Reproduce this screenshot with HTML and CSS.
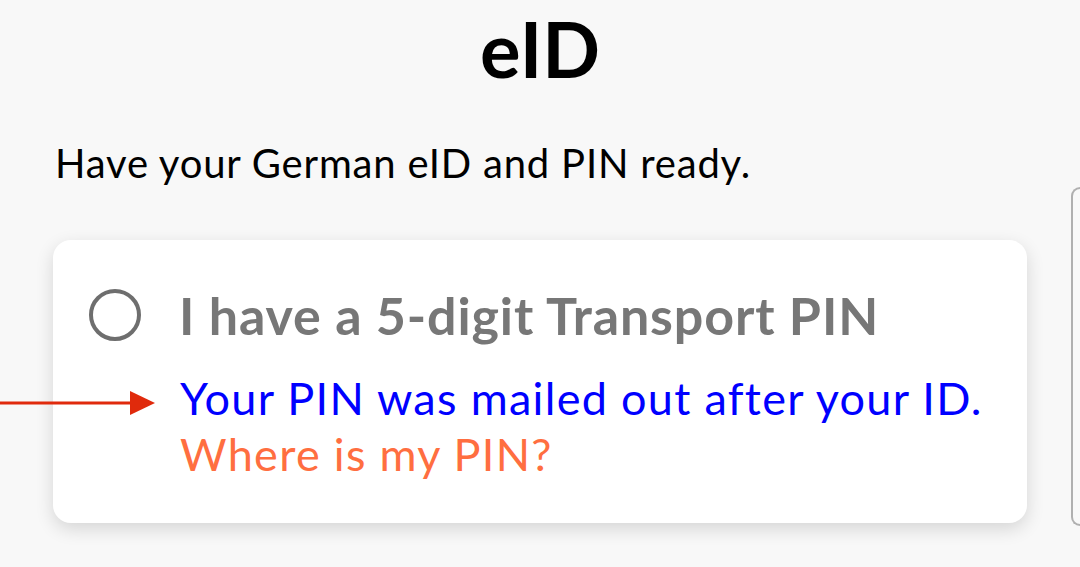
FILE: index.html
```html
<!DOCTYPE html>
<html>
<head>
<meta charset="utf-8">
<link rel="stylesheet" href="styles.css">
</head>
<body>
<div class="page">
  <h1 class="title">eID</h1>
  <p class="lead">Have your German eID and PIN ready.</p>
  <div class="row">
    <div class="card">
      <div class="option">
        <span class="radio"></span>
        <span class="option-label">I have a 5-digit Transport PIN</span>
      </div>
      <div class="hint">
        <div class="hint-blue">Your PIN was mailed out after your ID.</div>
        <div class="hint-link">Where is my PIN?</div>
      </div>
    </div>
    <div class="side"></div>
  </div>
  <svg class="arrow" width="160" height="30" viewBox="0 0 160 30">
    <line x1="0" y1="15" x2="132" y2="15" stroke="#e02a0c" stroke-width="3"/>
    <polygon points="130,3 155,15 130,27" fill="#e02a0c"/>
  </svg>
</div>
</body>
</html>
```
FILE: styles.css
```css
html, body {
  margin: 0;
  padding: 0;
}
body {
  background: #f8f8f8;
  font-family: Lato, "Open Sans", sans-serif;
  width: 1080px;
  height: 567px;
  overflow: hidden;
}
.page {
  position: relative;
  height: 567px;
}
.title {
  margin: 0;
  padding-top: 3px;
  text-align: center;
  font-size: 76px;
  font-weight: 700;
  line-height: 92px;
  color: #000;
}
.lead {
  margin: 42px 0 0 55px;
  font-size: 40px;
  line-height: 52px;
  letter-spacing: 0.8px;
  color: #000;
}
.row {
  display: flex;
  align-items: flex-start;
  gap: 44px;
  margin-top: 9px;
  padding-left: 53px;
}
.card {
  flex: 0 0 974px;
  height: 283px;
  box-sizing: border-box;
  margin-top: 42px;
  background: #fff;
  border-radius: 18px;
  box-shadow: 0 6px 18px rgba(0,0,0,0.14);
  padding: 43px 0 0 36px;
}
.option {
  display: flex;
  align-items: center;
  gap: 38px;
}
.radio {
  width: 44px;
  height: 44px;
  border: 4px solid #6e6e6e;
  border-radius: 50%;
  flex: none;
}
.option-label {
  font-size: 52px;
  font-weight: 700;
  color: #777;
  line-height: 64px;
  letter-spacing: 0.85px;
}
.hint {
  margin-left: 91px;
  margin-top: 23px;
  font-size: 45px;
  line-height: 56px;
  letter-spacing: 1.3px;
}
.hint-blue {
  color: #0000ff;
}
.hint-link {
  color: #ff6e40;
}
.side {
  flex: 1 1 auto;
  min-width: 0;
  height: 339px;
  margin-top: -11px;
  box-sizing: border-box;
  border: 2px solid #b0b0b0;
  border-right: none;
  border-radius: 10px 0 0 10px;
  background: #f9f9f9;
}
.arrow {
  position: absolute;
  left: 0;
  top: 388px;
}
```
